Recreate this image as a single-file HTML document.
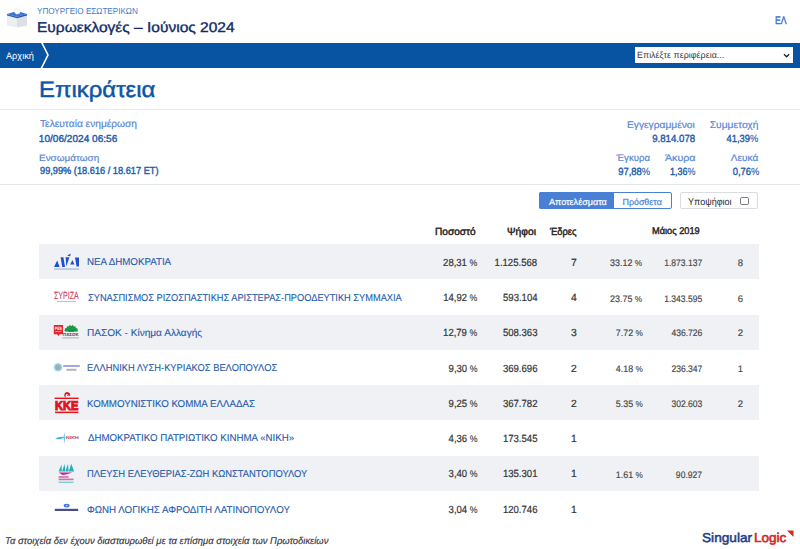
<!DOCTYPE html>
<html><head><meta charset="utf-8">
<style>
html,body{margin:0;padding:0;background:#fff;}
body{width:800px;height:549px;position:relative;overflow:hidden;font-family:"Liberation Sans",sans-serif;text-rendering:geometricPrecision;}
.a{position:absolute;white-space:nowrap;line-height:1;}
.s{position:absolute;}
</style></head><body>

<!-- ballot box icon -->
<svg class="s" style="left:0;top:0" width="32" height="32" viewBox="0 0 32 32">
  <polygon points="7,15 17,18 17,27.4 7,25.6" fill="#eceef2"/>
  <polygon points="17,18 27,15 27,25.6 17,27.4" fill="#dcdfe4"/>
  <polygon points="7,13.9 17,10.9 27,13.9 17,16.7" fill="#3c74da"/>
  <polygon points="7,13.9 17,16.7 17,18.3 7,15.5" fill="#2c60c6"/>
  <polygon points="17,16.7 27,13.9 27,15.5 17,18.3" fill="#2553b2"/>
  <polygon points="13.4,11.4 15.6,9.3 17.6,8.9 20.2,10.4 19.8,13.6 16.4,14.2" fill="#fdfdfd" stroke="#c8ccd3" stroke-width="0.35"/>
</svg>

<div class="s" style="left:0;top:42.6px;width:800px;height:25.3px;background:#0853a2;"></div>
<svg class="s" style="left:0;top:42px" width="60" height="26" viewBox="0 0 60 26">
  <polyline points="41,-1 48,13 41,27" fill="none" stroke="#fff" stroke-width="1.6"/>
</svg>
<div class="s" style="left:635px;top:47px;width:158px;height:16.2px;background:#fff;"></div>
<svg class="s" style="left:783px;top:53px" width="8" height="6" viewBox="0 0 8 6"><polyline points="1,1.2 3.6,3.7 6.2,1.2" fill="none" stroke="#222" stroke-width="1.35"/></svg>

<div class="s" style="left:0;top:109px;width:800px;height:1px;background:#e9eaec;"></div>
<div class="s" style="left:0;top:184px;width:800px;height:1px;background:#e4e7eb;"></div>

<!-- buttons -->
<div class="s" style="left:539px;top:192px;width:131px;height:15px;border:1px solid #4a7fd6;border-radius:2px;background:#fff;"></div>
<div class="s" style="left:539px;top:192px;width:75px;height:17px;background:#4a7fd6;border-radius:2px 0 0 2px;"></div>
<div class="s" style="left:680px;top:192px;width:76px;height:15px;border:1px solid #d9dde3;border-radius:2px;background:#fff;"></div>
<div class="s" style="left:740.3px;top:196.6px;width:6.4px;height:6.4px;border:1.4px solid #7c7c80;border-radius:1.8px;"></div>

<!-- rows -->
<div class="s" style="left:39px;top:244px;width:720px;height:35.4px;background:#eff1f4;"></div>
<div class="s" style="left:39px;top:314.6px;width:720px;height:35.3px;background:#eff1f4;"></div>
<div class="s" style="left:39px;top:385.2px;width:720px;height:35.3px;background:#eff1f4;"></div>
<div class="s" style="left:39px;top:455.8px;width:720px;height:35.3px;background:#eff1f4;"></div>


<!-- ND -->
<svg class="s" style="left:50px;top:250px" width="32" height="24" viewBox="50 250 32 24">
  <polygon points="54,267 57.2,260.5 59.6,267" fill="#1d50cc"/>
  <polygon points="60.6,257.3 63.4,257.3 65,267 62.2,267" fill="#1d50cc"/>
  <polygon points="65.6,257.3 69.4,257.3 66.3,266.5" fill="#1d50cc"/>
  <polygon points="67.2,255.8 70.6,253.4 70.2,256.2" fill="#1d50cc"/>
  <polygon points="70.2,264.6 72.4,260 74.4,264.6" fill="#1d50cc"/>
  <polygon points="75,257.4 79,257.4 79,266.6 76.6,266.6" fill="#1d50cc"/>
  <rect x="54" y="268.4" width="25" height="1.3" fill="#3a5fc0" opacity="0.4"/>
</svg>
<!-- SYRIZA -->
<div class="a" style="left:54.4px;top:292.2px;font-size:10.4px;color:#cc3c5a;transform:scaleX(0.68);transform-origin:0 0;-webkit-text-stroke:0.1px #d2405c;">ΣΥΡΙΖΑ</div>
<div class="s" style="left:57px;top:301.2px;width:19px;height:1px;background:#d87088;opacity:0.55;"></div>
<!-- PASOK -->
<svg class="s" style="left:50px;top:318px" width="32" height="28" viewBox="50 318 32 28">
  <path d="M53.8,324.9 H63 V334.3 H59.5 L58.4,336.2 L57.3,334.3 H53.8 Z" fill="#e8202a"/>
  <text x="54.8" y="329.6" font-family="Liberation Sans" font-weight="bold" font-size="4.6" fill="#fff" textLength="7.2" lengthAdjust="spacingAndGlyphs">PES</text>
  <rect x="55.4" y="331" width="6" height="1.1" fill="#fff" opacity="0.55"/>
  <path d="M65.2,331.6 A6,5.6 0 0 1 77.2,331.6 Z" fill="#169a44"/>
  <path d="M64.4,331.2 L65.2,328 L66.6,328.6 L67,325.9 L68.6,326.8 L69.8,324.8 L71.2,326.2 L72.6,324.8 L73.8,326.8 L75.4,325.9 L75.8,328.6 L77.2,328 L78,331.2 Z" fill="#169a44"/>
  <rect x="68.5" y="330.6" width="5.4" height="0.9" fill="#0d6a2c"/>
  <text x="63" y="336.1" font-family="Liberation Sans" font-weight="bold" font-size="4.4" fill="#3a3a44" textLength="15.6" lengthAdjust="spacingAndGlyphs">ΠΑΣΟΚ</text>
  <rect x="62.2" y="337.4" width="16.8" height="1" fill="#7a7e86" opacity="0.6"/>
</svg>
<!-- Elliniki Lysi -->
<svg class="s" style="left:50px;top:356px" width="32" height="22" viewBox="50 356 32 22">
  <circle cx="58" cy="367.2" r="4.3" fill="#a8d4ee"/>
  <circle cx="58" cy="367.2" r="2.8" fill="#78b8dc"/>
  <path d="M56.6,368.4 L58,364.8 L59.4,368.4 Z" fill="#e8a030"/>
  <rect x="63.2" y="365" width="16.6" height="2" fill="#6470c8" opacity="0.6"/>
  <rect x="66.4" y="368.8" width="10" height="2" fill="#555a66" opacity="0.45"/>
</svg>
<!-- KKE -->
<svg class="s" style="left:50px;top:388px" width="32" height="28" viewBox="50 388 32 28">
  <rect x="54.6" y="397.6" width="24" height="1.4" fill="#e3141c"/>
  <rect x="55" y="411.6" width="23.4" height="1.5" fill="#e3141c"/>
  <path d="M65.5,397.5 A3,3 0 1 1 70.2,395.4 L69,396.2 A1.8,1.8 0 1 0 66.6,397.4 Z" fill="#e3141c"/>
  <rect x="67.8" y="393" width="1.2" height="3.2" fill="#e3141c" transform="rotate(35 68.4 394.6)"/>
  <text x="55" y="410" font-family="Liberation Sans" font-weight="bold" font-size="12.8" fill="#e3141c" stroke="#e3141c" stroke-width="1.1" textLength="23.4" lengthAdjust="spacingAndGlyphs">KKE</text>
</svg>
<!-- NIKI -->
<svg class="s" style="left:50px;top:426px" width="32" height="22" viewBox="50 426 32 22">
  <path d="M64.2,431.6 Q65.2,437.5 64.2,444 Q63.2,437.5 64.2,431.6 Z" fill="#22a8e0"/>
  <path d="M55,438.8 Q60,436 64.6,437.2 Q60,440 55,438.8 Z" fill="#38b0e6"/>
  <text x="65.8" y="439.2" font-family="Liberation Sans" font-size="4.2" fill="#d03848" stroke="#d03848" stroke-width="0.15" textLength="13" lengthAdjust="spacingAndGlyphs">ΝΙΚΗ</text>
</svg>
<!-- PLEFSI -->
<svg class="s" style="left:50px;top:456px" width="32" height="32" viewBox="50 456 32 32">
  <polygon points="58.6,471.4 61.5,464.4 61.8,471.4" fill="#22b0c0"/>
  <polygon points="62,471.4 64.7,463.8 65.2,471.4" fill="#22b0c0"/>
  <polygon points="65.4,471.4 68,463.8 68.6,471.4" fill="#22b0c0"/>
  <polygon points="68.8,471.4 71.2,463.8 74.2,471.4" fill="#22b0c0"/>
  <path d="M58.6,472.4 L72.4,472.4 Q66,474.5 62.6,475 Z" fill="#c02888"/>
  <rect x="58.6" y="476.2" width="10" height="1.6" fill="#c8409a" opacity="0.75"/>
  <rect x="58.6" y="478.6" width="15" height="1.6" fill="#c8409a" opacity="0.75"/>
  <rect x="58.6" y="481.6" width="15" height="1.4" fill="#50c0c8" opacity="0.7"/>
</svg>
<!-- FONI LOGIKIS -->
<svg class="s" style="left:50px;top:496px" width="32" height="22" viewBox="50 496 32 22">
  <ellipse cx="66.6" cy="505.6" rx="3" ry="1.9" fill="#3a6ee0"/>
  <ellipse cx="66.6" cy="505.6" rx="1.2" ry="0.9" fill="#a8c4f4"/>
  <rect x="54.8" y="508.8" width="23.4" height="2.2" fill="#1a2270" opacity="0.8"/>
</svg>
<!-- SingularLogic -->

<svg class="s" style="left:786px;top:529px" width="10" height="10" viewBox="0 0 10 10"><polygon points="1,1.5 7.5,1.5 7.5,8" fill="#d8281e"/></svg>


<div class="a" id="min" style="top:6.60px;font-size:8.75px;color:#3f7cc8;left:36.90px;transform:scaleX(0.928);transform-origin:0 0;">ΥΠΟΥΡΓΕΙΟ ΕΣΩΤΕΡΙΚΩΝ</div>
<div class="a" id="title" style="top:20.27px;font-size:14.10px;color:#0f2a66;-webkit-text-stroke:0.35px #0f2a66;left:37.00px;transform:scaleX(1.101);transform-origin:0 0;">Ευρωεκλογές – Ιούνιος 2024</div>
<div class="a" id="lang" style="top:15.71px;font-size:10.97px;color:#3a6fd0;-webkit-text-stroke:0.4px #3a6fd0;left:774.50px;transform:scaleX(0.786);transform-origin:0 0;">ΕΛ</div>
<div class="a" id="home" style="top:52.04px;font-size:9.64px;color:#fff;left:5.90px;transform:scaleX(0.953);transform-origin:0 0;">Αρχική</div>
<div class="a" id="sel" style="top:51.14px;font-size:9.04px;color:#3a3a3a;left:636.50px;transform:scaleX(0.990);transform-origin:0 0;">Επιλέξτε περιφέρεια...</div>
<div class="a" id="h1" style="top:79.45px;font-size:22.38px;color:#0a55a7;-webkit-text-stroke:0.45px #0a55a7;left:38.80px;transform:scaleX(1.069);transform-origin:0 0;">Επικράτεια</div>
<div class="a" id="l1" style="top:120.37px;font-size:10.08px;color:#5a88d6;-webkit-text-stroke:0.2px #5a88d6;left:39.80px;transform:scaleX(1.011);transform-origin:0 0;">Τελευταία ενημέρωση</div>
<div class="a" id="v1" style="top:135.17px;font-size:10.08px;color:#1d5cac;-webkit-text-stroke:0.4px #1d5cac;left:38.80px;">10/06/2024 06:56</div>
<div class="a" id="l2" style="top:154.02px;font-size:9.19px;color:#5a88d6;-webkit-text-stroke:0.2px #5a88d6;left:38.80px;transform:scaleX(1.084);transform-origin:0 0;">Ενσωμάτωση</div>
<div class="a" id="v2" style="top:167.24px;font-size:10.23px;color:#1d5cac;-webkit-text-stroke:0.4px #1d5cac;left:39.80px;transform:scaleX(0.903);transform-origin:0 0;">99,99% (18.616 / 18.617 ΕΤ)</div>
<div class="a" id="l3" style="top:121.02px;font-size:9.78px;color:#5a88d6;-webkit-text-stroke:0.2px #5a88d6;right:105.00px;transform:scaleX(1.047);transform-origin:100% 0;">Εγγεγραμμένοι</div>
<div class="a" id="v3" style="top:134.72px;font-size:10.38px;color:#1d5cac;-webkit-text-stroke:0.4px #1d5cac;right:105.00px;transform:scaleX(0.931);transform-origin:100% 0;">9.814.078</div>
<div class="a" id="l4" style="top:121.02px;font-size:9.78px;color:#5a88d6;-webkit-text-stroke:0.2px #5a88d6;right:41.60px;transform:scaleX(1.048);transform-origin:100% 0;">Συμμετοχή</div>
<div class="a" id="v4" style="top:134.72px;font-size:10.38px;color:#1d5cac;-webkit-text-stroke:0.4px #1d5cac;right:41.80px;transform:scaleX(0.898);transform-origin:100% 0;">41,39<span style="-webkit-text-stroke:0.1px #1d5cac">%</span></div>
<div class="a" id="l5" style="top:153.84px;font-size:9.64px;color:#5a88d6;-webkit-text-stroke:0.2px #5a88d6;right:150.00px;">Έγκυρα</div>
<div class="a" id="v5" style="top:167.72px;font-size:10.38px;color:#1d5cac;-webkit-text-stroke:0.4px #1d5cac;right:150.00px;transform:scaleX(0.910);transform-origin:100% 0;">97,88<span style="-webkit-text-stroke:0.1px #1d5cac">%</span></div>
<div class="a" id="l6" style="top:153.84px;font-size:9.64px;color:#5a88d6;-webkit-text-stroke:0.2px #5a88d6;right:104.00px;transform:scaleX(1.111);transform-origin:100% 0;">Άκυρα</div>
<div class="a" id="v6" style="top:167.72px;font-size:10.38px;color:#1d5cac;-webkit-text-stroke:0.4px #1d5cac;right:105.00px;transform:scaleX(0.863);transform-origin:100% 0;">1,36<span style="-webkit-text-stroke:0.1px #1d5cac">%</span></div>
<div class="a" id="l7" style="top:153.84px;font-size:9.64px;color:#5a88d6;-webkit-text-stroke:0.2px #5a88d6;right:41.60px;transform:scaleX(1.048);transform-origin:100% 0;">Λευκά</div>
<div class="a" id="v7" style="top:167.72px;font-size:10.38px;color:#1d5cac;-webkit-text-stroke:0.4px #1d5cac;right:40.80px;transform:scaleX(0.908);transform-origin:100% 0;">0,76<span style="-webkit-text-stroke:0.1px #1d5cac">%</span></div>
<div class="a" id="b1" style="top:197.97px;font-size:8.90px;color:#fff;-webkit-text-stroke:0.2px #fff;left:548.50px;transform:scaleX(1.018);transform-origin:0 0;">Αποτελέσματα</div>
<div class="a" id="b2" style="top:197.57px;font-size:8.90px;color:#4a7fd6;-webkit-text-stroke:0.2px #4a7fd6;left:622.50px;">Πρόσθετα</div>
<div class="a" id="b3" style="top:197.72px;font-size:9.78px;color:#2a2a2a;left:687.90px;transform:scaleX(0.927);transform-origin:0 0;">Υποψήφιοι</div>
<div class="a" id="th1" style="top:228.22px;font-size:10.38px;color:#222;-webkit-text-stroke:0.45px #222;left:435.00px;transform:scaleX(0.976);transform-origin:0 0;">Ποσοστό</div>
<div class="a" id="th2" style="top:228.22px;font-size:10.38px;color:#222;-webkit-text-stroke:0.45px #222;left:507.40px;transform:scaleX(0.991);transform-origin:0 0;">Ψήφοι</div>
<div class="a" id="th3" style="top:228.22px;font-size:10.38px;color:#222;-webkit-text-stroke:0.45px #222;left:550.00px;transform:scaleX(0.900);transform-origin:0 0;">Έδρες</div>
<div class="a" id="th4" style="top:227.32px;font-size:9.78px;color:#222;-webkit-text-stroke:0.4px #222;left:651.60px;transform:scaleX(0.945);transform-origin:0 0;">Μάιος 2019</div>
<div class="a" id="sing" style="top:531.65px;font-size:12.94px;color:#1c3e88;-webkit-text-stroke:0.5px #1c3e88;left:702.00px;transform:scaleX(1.056);transform-origin:0 0;">Singular</div>
<div class="a" id="logic" style="top:531.65px;font-size:12.94px;color:#d42a20;-webkit-text-stroke:0.6px #d42a20;left:754.20px;transform:scaleX(1.047);transform-origin:0 0;">Logic</div>
<div class="a" id="foot" style="top:536.92px;font-size:9.78px;color:#36363c;font-style:italic;-webkit-text-stroke:0.15px #36363c;left:4.60px;transform:scaleX(0.965);transform-origin:0 0;">Τα στοιχεία δεν έχουν διασταυρωθεί με τα επίσημα στοιχεία των Πρωτοδικείων</div>
<div class="a" id="r0n" style="top:257.99px;font-size:9.93px;color:#1f5cae;-webkit-text-stroke:0.12px #1f5cae;left:86.50px;transform:scaleX(0.982);transform-origin:0 0;">ΝΕΑ ΔΗΜΟΚΡΑΤΙΑ</div>
<div class="a" id="r0p" style="top:258.82px;font-size:10.38px;color:#333;-webkit-text-stroke:0.2px #333;right:323.00px;transform:scaleX(0.917);transform-origin:100% 0;">28,31 <span style="font-size:0.92em;-webkit-text-stroke:0.1px #333">%</span></div>
<div class="a" id="r0v" style="top:258.82px;font-size:10.38px;color:#333;-webkit-text-stroke:0.2px #333;right:263.10px;transform:scaleX(0.923);transform-origin:100% 0;">1.125.568</div>
<div class="a" id="r0s" style="top:258.82px;font-size:10.38px;color:#333;-webkit-text-stroke:0.2px #333;right:223.30px;">7</div>
<div class="a" id="r0p19" style="top:258.97px;font-size:9.49px;color:#444;-webkit-text-stroke:0.15px #444;right:157.50px;transform:scaleX(0.938);transform-origin:100% 0;">33.12 <span style="font-size:0.92em;-webkit-text-stroke:0.1px #333">%</span></div>
<div class="a" id="r0v19" style="top:258.97px;font-size:9.49px;color:#444;-webkit-text-stroke:0.15px #444;right:98.00px;transform:scaleX(0.901);transform-origin:100% 0;">1.873.137</div>
<div class="a" id="r0s19" style="top:258.97px;font-size:9.49px;color:#444;-webkit-text-stroke:0.15px #444;right:57.00px;">8</div>
<div class="a" id="r1n" style="top:293.69px;font-size:9.93px;color:#1f5cae;-webkit-text-stroke:0.12px #1f5cae;left:87.50px;transform:scaleX(0.932);transform-origin:0 0;">ΣΥΝΑΣΠΙΣΜΟΣ ΡΙΖΟΣΠΑΣΤΙΚΗΣ ΑΡΙΣΤΕΡΑΣ-ΠΡΟΟΔΕΥΤΙΚΗ ΣΥΜΜΑΧΙΑ</div>
<div class="a" id="r1p" style="top:293.52px;font-size:10.38px;color:#333;-webkit-text-stroke:0.2px #333;right:323.00px;transform:scaleX(0.914);transform-origin:100% 0;">14,92 <span style="font-size:0.92em;-webkit-text-stroke:0.1px #333">%</span></div>
<div class="a" id="r1v" style="top:293.52px;font-size:10.38px;color:#333;-webkit-text-stroke:0.2px #333;right:262.10px;transform:scaleX(0.919);transform-origin:100% 0;">593.104</div>
<div class="a" id="r1s" style="top:293.52px;font-size:10.38px;color:#333;-webkit-text-stroke:0.2px #333;right:223.30px;">4</div>
<div class="a" id="r1p19" style="top:294.67px;font-size:9.49px;color:#444;-webkit-text-stroke:0.15px #444;right:157.50px;transform:scaleX(0.938);transform-origin:100% 0;">23.75 <span style="font-size:0.92em;-webkit-text-stroke:0.1px #333">%</span></div>
<div class="a" id="r1v19" style="top:294.67px;font-size:9.49px;color:#444;-webkit-text-stroke:0.15px #444;right:98.00px;transform:scaleX(0.901);transform-origin:100% 0;">1.343.595</div>
<div class="a" id="r1s19" style="top:294.67px;font-size:9.49px;color:#444;-webkit-text-stroke:0.15px #444;right:57.00px;">6</div>
<div class="a" id="r2n" style="top:329.39px;font-size:9.93px;color:#1f5cae;-webkit-text-stroke:0.12px #1f5cae;left:86.50px;transform:scaleX(1.015);transform-origin:0 0;">ΠΑΣΟΚ - Κίνημα Αλλαγής</div>
<div class="a" id="r2p" style="top:329.22px;font-size:10.38px;color:#333;-webkit-text-stroke:0.2px #333;right:323.00px;transform:scaleX(0.917);transform-origin:100% 0;">12,79 <span style="font-size:0.92em;-webkit-text-stroke:0.1px #333">%</span></div>
<div class="a" id="r2v" style="top:329.22px;font-size:10.38px;color:#333;-webkit-text-stroke:0.2px #333;right:262.10px;transform:scaleX(0.923);transform-origin:100% 0;">508.363</div>
<div class="a" id="r2s" style="top:329.22px;font-size:10.38px;color:#333;-webkit-text-stroke:0.2px #333;right:223.30px;">3</div>
<div class="a" id="r2p19" style="top:329.37px;font-size:9.49px;color:#444;-webkit-text-stroke:0.15px #444;right:157.50px;transform:scaleX(0.938);transform-origin:100% 0;">7.72 <span style="font-size:0.92em;-webkit-text-stroke:0.1px #333">%</span></div>
<div class="a" id="r2v19" style="top:329.37px;font-size:9.49px;color:#444;-webkit-text-stroke:0.15px #444;right:98.00px;transform:scaleX(0.901);transform-origin:100% 0;">436.726</div>
<div class="a" id="r2s19" style="top:329.37px;font-size:9.49px;color:#444;-webkit-text-stroke:0.15px #444;right:57.00px;">2</div>
<div class="a" id="r3n" style="top:364.09px;font-size:9.93px;color:#1f5cae;-webkit-text-stroke:0.12px #1f5cae;left:86.50px;transform:scaleX(0.940);transform-origin:0 0;">ΕΛΛΗΝΙΚΗ ΛΥΣΗ-ΚΥΡΙΑΚΟΣ ΒΕΛΟΠΟΥΛΟΣ</div>
<div class="a" id="r3p" style="top:364.92px;font-size:10.38px;color:#333;-webkit-text-stroke:0.2px #333;right:322.00px;transform:scaleX(0.917);transform-origin:100% 0;">9,30 <span style="font-size:0.92em;-webkit-text-stroke:0.1px #333">%</span></div>
<div class="a" id="r3v" style="top:364.92px;font-size:10.38px;color:#333;-webkit-text-stroke:0.2px #333;right:262.10px;transform:scaleX(0.923);transform-origin:100% 0;">369.696</div>
<div class="a" id="r3s" style="top:364.92px;font-size:10.38px;color:#333;-webkit-text-stroke:0.2px #333;right:223.30px;">2</div>
<div class="a" id="r3p19" style="top:365.07px;font-size:9.49px;color:#444;-webkit-text-stroke:0.15px #444;right:157.50px;transform:scaleX(0.938);transform-origin:100% 0;">4.18 <span style="font-size:0.92em;-webkit-text-stroke:0.1px #333">%</span></div>
<div class="a" id="r3v19" style="top:365.07px;font-size:9.49px;color:#444;-webkit-text-stroke:0.15px #444;right:98.00px;transform:scaleX(0.901);transform-origin:100% 0;">236.347</div>
<div class="a" id="r3s19" style="top:365.07px;font-size:9.49px;color:#444;-webkit-text-stroke:0.15px #444;right:57.00px;">1</div>
<div class="a" id="r4n" style="top:399.79px;font-size:9.93px;color:#1f5cae;-webkit-text-stroke:0.12px #1f5cae;left:86.50px;transform:scaleX(0.979);transform-origin:0 0;">ΚΟΜΜΟΥΝΙΣΤΙΚΟ ΚΟΜΜΑ ΕΛΛΑΔΑΣ</div>
<div class="a" id="r4p" style="top:399.62px;font-size:10.38px;color:#333;-webkit-text-stroke:0.2px #333;right:322.00px;transform:scaleX(0.917);transform-origin:100% 0;">9,25 <span style="font-size:0.92em;-webkit-text-stroke:0.1px #333">%</span></div>
<div class="a" id="r4v" style="top:399.62px;font-size:10.38px;color:#333;-webkit-text-stroke:0.2px #333;right:262.10px;transform:scaleX(0.923);transform-origin:100% 0;">367.782</div>
<div class="a" id="r4s" style="top:399.62px;font-size:10.38px;color:#333;-webkit-text-stroke:0.2px #333;right:223.30px;">2</div>
<div class="a" id="r4p19" style="top:399.77px;font-size:9.49px;color:#444;-webkit-text-stroke:0.15px #444;right:157.50px;transform:scaleX(0.938);transform-origin:100% 0;">5.35 <span style="font-size:0.92em;-webkit-text-stroke:0.1px #333">%</span></div>
<div class="a" id="r4v19" style="top:399.77px;font-size:9.49px;color:#444;-webkit-text-stroke:0.15px #444;right:98.00px;transform:scaleX(0.901);transform-origin:100% 0;">302.603</div>
<div class="a" id="r4s19" style="top:399.77px;font-size:9.49px;color:#444;-webkit-text-stroke:0.15px #444;right:57.00px;">2</div>
<div class="a" id="r5n" style="top:434.49px;font-size:9.93px;color:#1f5cae;-webkit-text-stroke:0.12px #1f5cae;left:87.50px;transform:scaleX(0.978);transform-origin:0 0;">ΔΗΜΟΚΡΑΤΙΚΟ ΠΑΤΡΙΩΤΙΚΟ ΚΙΝΗΜΑ «ΝΙΚΗ»</div>
<div class="a" id="r5p" style="top:435.32px;font-size:10.38px;color:#333;-webkit-text-stroke:0.2px #333;right:322.00px;transform:scaleX(0.917);transform-origin:100% 0;">4,36 <span style="font-size:0.92em;-webkit-text-stroke:0.1px #333">%</span></div>
<div class="a" id="r5v" style="top:435.32px;font-size:10.38px;color:#333;-webkit-text-stroke:0.2px #333;right:262.10px;transform:scaleX(0.923);transform-origin:100% 0;">173.545</div>
<div class="a" id="r5s" style="top:435.32px;font-size:10.38px;color:#333;-webkit-text-stroke:0.2px #333;right:223.30px;">1</div>
<div class="a" id="r6n" style="top:470.19px;font-size:9.93px;color:#1f5cae;-webkit-text-stroke:0.12px #1f5cae;left:86.50px;transform:scaleX(0.945);transform-origin:0 0;">ΠΛΕΥΣΗ ΕΛΕΥΘΕΡΙΑΣ-ΖΩΗ ΚΩΝΣΤΑΝΤΟΠΟΥΛΟΥ</div>
<div class="a" id="r6p" style="top:470.02px;font-size:10.38px;color:#333;-webkit-text-stroke:0.2px #333;right:322.00px;transform:scaleX(0.917);transform-origin:100% 0;">3,40 <span style="font-size:0.92em;-webkit-text-stroke:0.1px #333">%</span></div>
<div class="a" id="r6v" style="top:470.02px;font-size:10.38px;color:#333;-webkit-text-stroke:0.2px #333;right:262.10px;transform:scaleX(0.923);transform-origin:100% 0;">135.301</div>
<div class="a" id="r6s" style="top:470.02px;font-size:10.38px;color:#333;-webkit-text-stroke:0.2px #333;right:223.30px;">1</div>
<div class="a" id="r6p19" style="top:471.17px;font-size:9.49px;color:#444;-webkit-text-stroke:0.15px #444;right:157.50px;transform:scaleX(0.938);transform-origin:100% 0;">1.61 <span style="font-size:0.92em;-webkit-text-stroke:0.1px #333">%</span></div>
<div class="a" id="r6v19" style="top:471.17px;font-size:9.49px;color:#444;-webkit-text-stroke:0.15px #444;right:98.00px;transform:scaleX(0.901);transform-origin:100% 0;">90.927</div>
<div class="a" id="r7n" style="top:505.89px;font-size:9.93px;color:#1f5cae;-webkit-text-stroke:0.12px #1f5cae;left:86.50px;transform:scaleX(0.982);transform-origin:0 0;">ΦΩΝΗ ΛΟΓΙΚΗΣ ΑΦΡΟΔΙΤΗ ΛΑΤΙΝΟΠΟΥΛΟΥ</div>
<div class="a" id="r7p" style="top:505.72px;font-size:10.38px;color:#333;-webkit-text-stroke:0.2px #333;right:322.00px;transform:scaleX(0.917);transform-origin:100% 0;">3,04 <span style="font-size:0.92em;-webkit-text-stroke:0.1px #333">%</span></div>
<div class="a" id="r7v" style="top:505.72px;font-size:10.38px;color:#333;-webkit-text-stroke:0.2px #333;right:262.10px;transform:scaleX(0.923);transform-origin:100% 0;">120.746</div>
<div class="a" id="r7s" style="top:505.72px;font-size:10.38px;color:#333;-webkit-text-stroke:0.2px #333;right:223.30px;">1</div>

</body></html>
